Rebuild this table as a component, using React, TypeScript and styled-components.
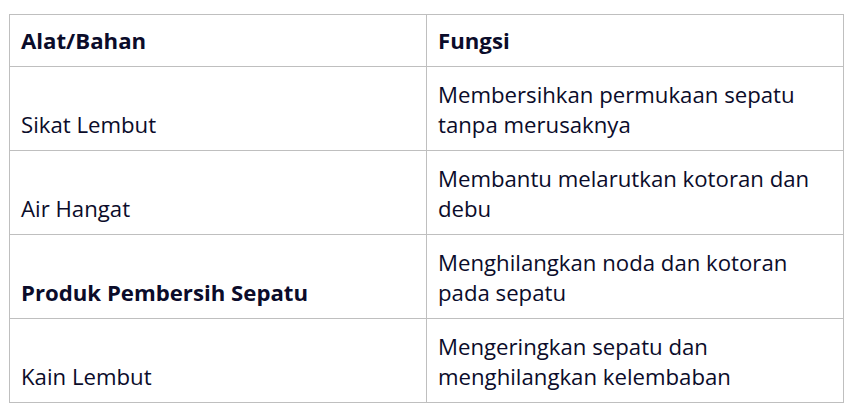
import React from "react";
import styled, { createGlobalStyle } from "styled-components";

const GlobalStyle = createGlobalStyle`
  html, body {
    margin: 0;
    padding: 0;
    background: #ffffff;
  }
  body {
    font-family: "Open Sans", "Noto Sans", sans-serif;
    color: #0b0c2a;
  }
`;

const Page = styled.div`
  padding: 14px 10px 0 9px;
`;

const Table = styled.table`
  width: 834px;
  border-collapse: collapse;
  table-layout: fixed;
  font-size: 22.2px;
  line-height: 30px;
`;

const HeadCell = styled.th`
  border: 1px solid #bfbfbf;
  padding: 11px 11px 10px;
  text-align: left;
  font-weight: 700;
  vertical-align: middle;
`;

const Cell = styled.td<{ $bold?: boolean }>`
  border: 1px solid #bfbfbf;
  padding: 13px 11px 10px;
  height: 60px;
  font-weight: ${(p) => (p.$bold ? 700 : 400)};
  vertical-align: bottom;
`;

const rows = [
  { tool: "Sikat Lembut", use: "Membersihkan permukaan sepatu tanpa merusaknya" },
  { tool: "Air Hangat", use: "Membantu melarutkan kotoran dan debu" },
  { tool: "Produk Pembersih Sepatu", use: "Menghilangkan noda dan kotoran pada sepatu", bold: true },
  { tool: "Kain Lembut", use: "Mengeringkan sepatu dan menghilangkan kelembaban" },
];

export default function App() {
  return (
    <Page>
      <GlobalStyle />
      <Table>
        <colgroup>
          <col style={{ width: 417 }} />
          <col style={{ width: 417 }} />
        </colgroup>
        <thead>
          <tr>
            <HeadCell>Alat/Bahan</HeadCell>
            <HeadCell>Fungsi</HeadCell>
          </tr>
        </thead>
        <tbody>
          {rows.map((r) => (
            <tr key={r.tool}>
              <Cell $bold={r.bold}>{r.tool}</Cell>
              <Cell>{r.use}</Cell>
            </tr>
          ))}
        </tbody>
      </Table>
    </Page>
  );
}
